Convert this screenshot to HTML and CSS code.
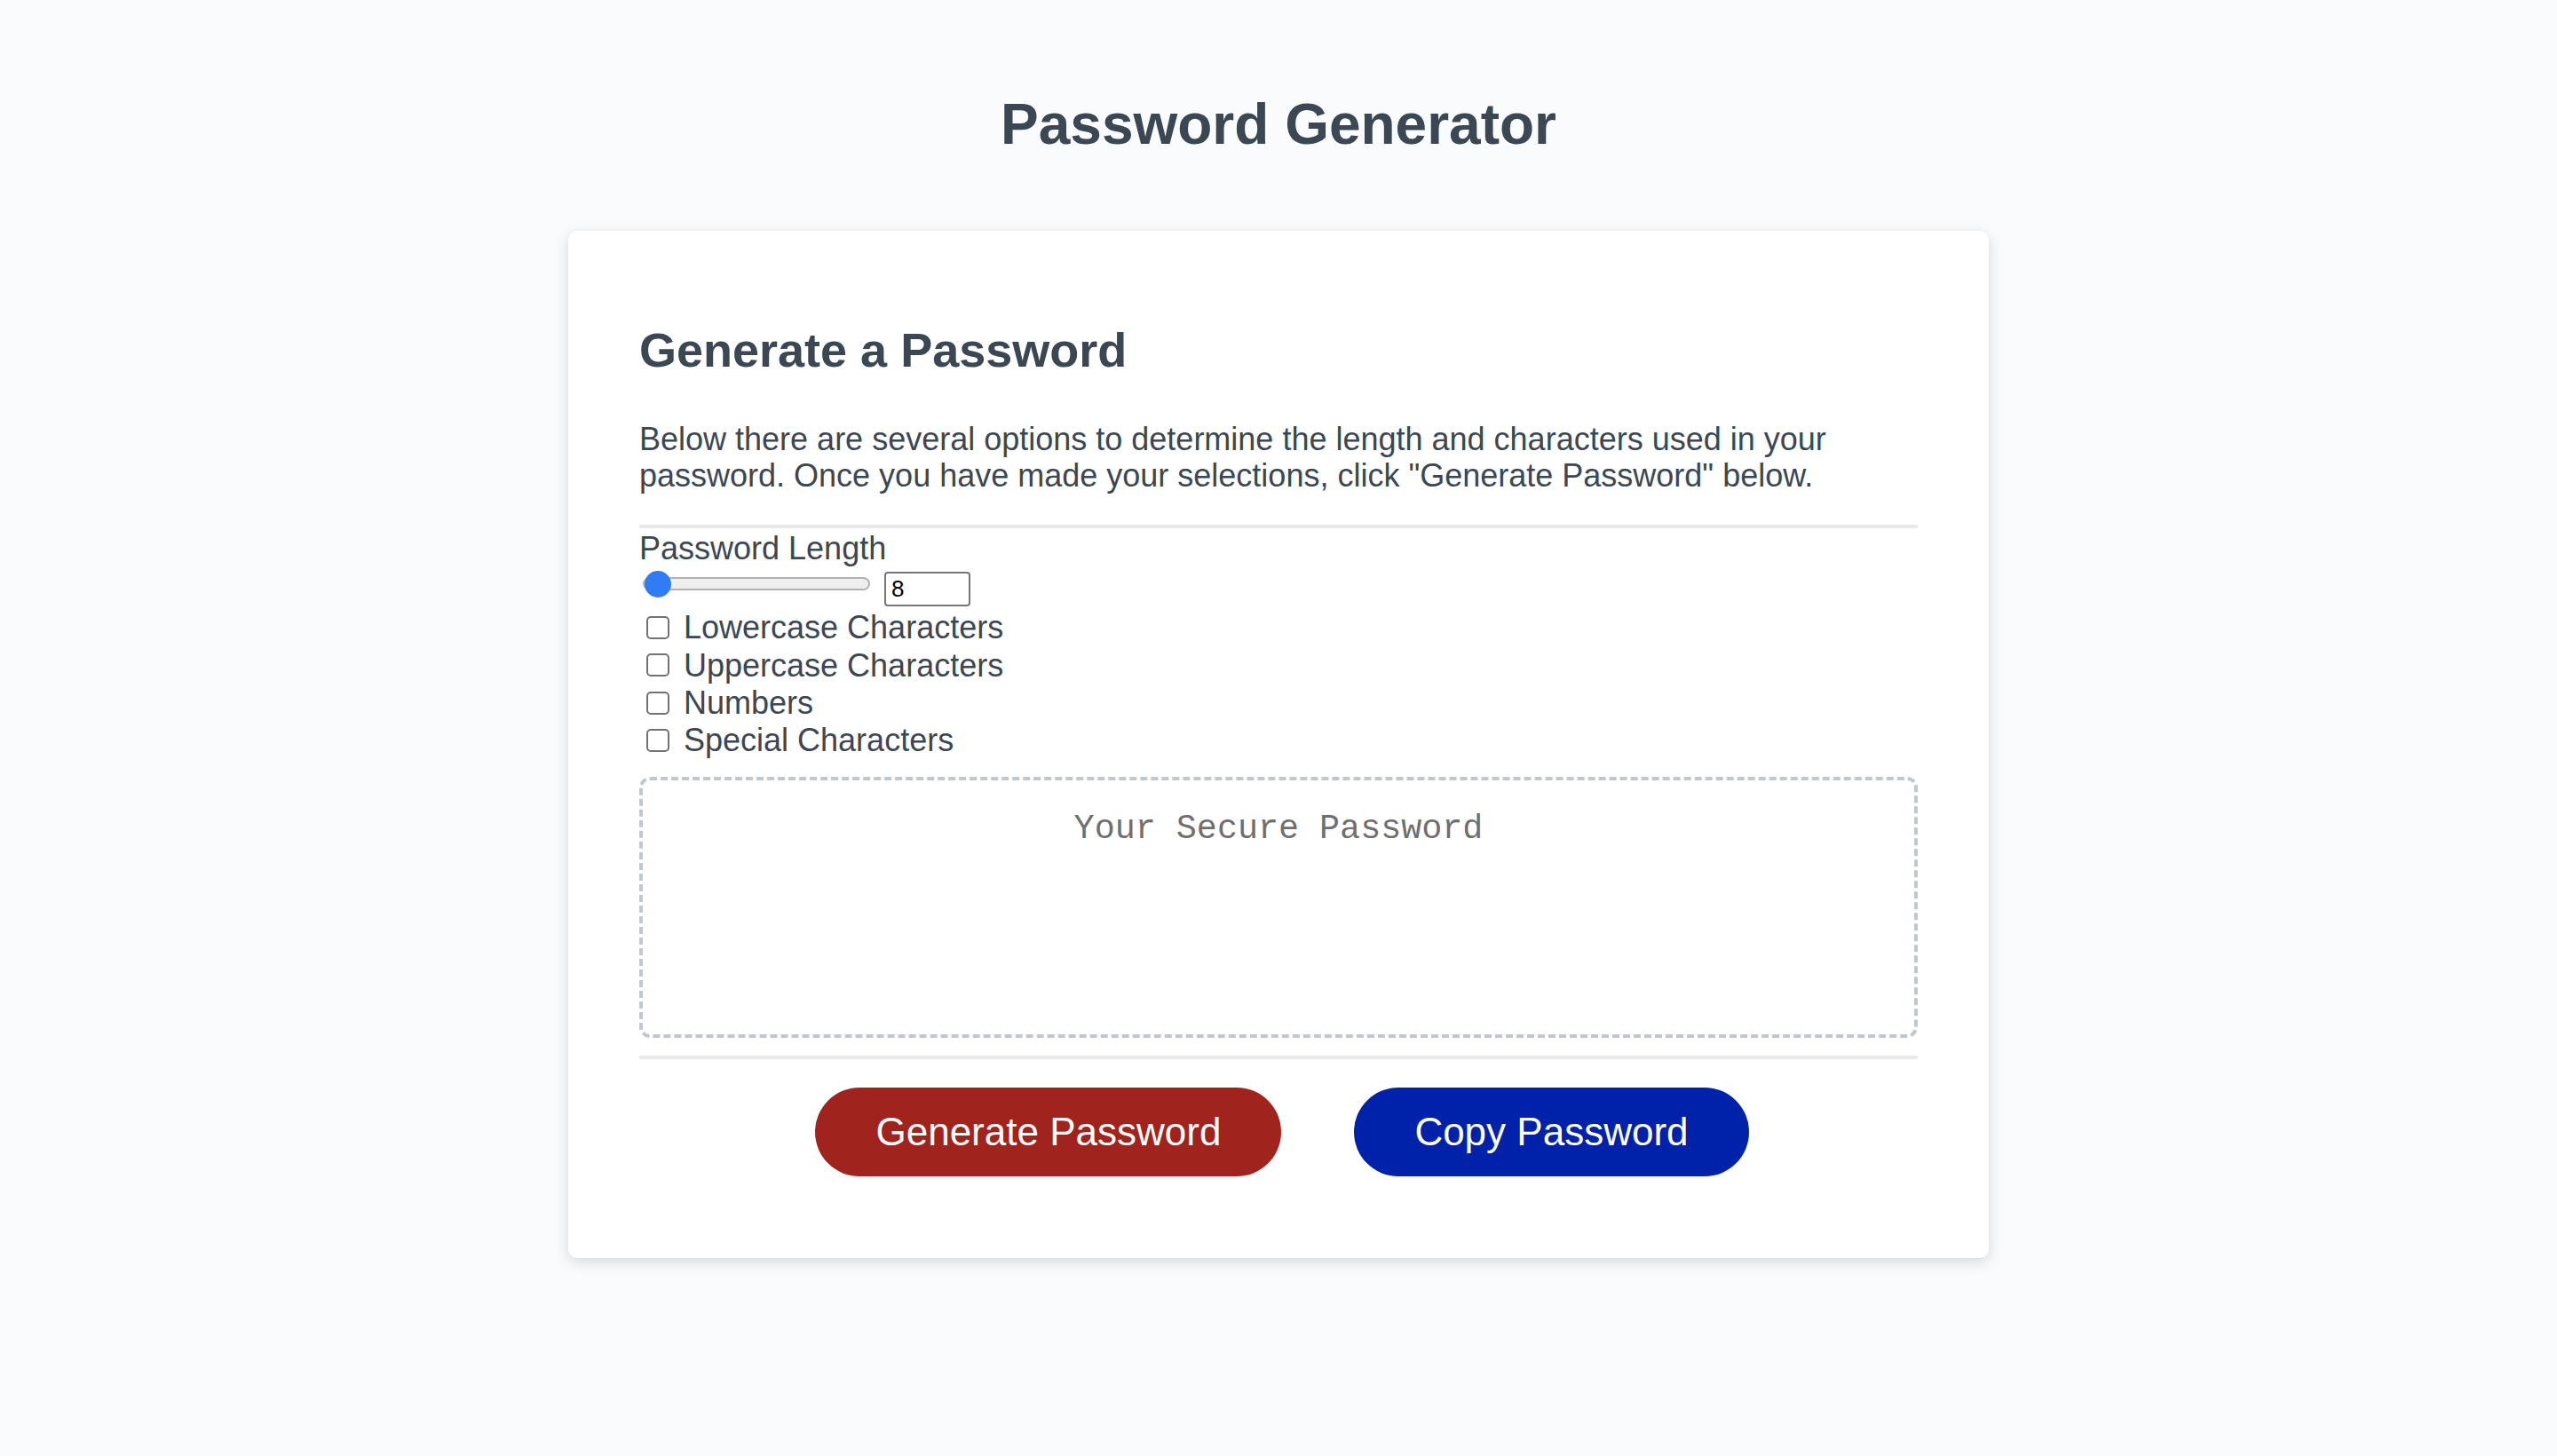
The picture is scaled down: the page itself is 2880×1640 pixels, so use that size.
FILE: index.html
```html
<!DOCTYPE html>
<html lang="en">
<head>
<meta charset="UTF-8">
<title>Password Generator</title>
<link rel="stylesheet" href="styles.css">
</head>
<body>
<div class="wrapper">
  <header class="page-header">
    <h1 class="page-title">Password Generator</h1>
  </header>
  <div class="card">
    <div class="card-header">
      <h2 class="card-title">Generate a Password</h2>
      <p class="card-text">Below there are several options to determine the length and characters used in your password. Once you have made your selections, click "Generate Password" below.</p>
    </div>
    <div class="card-body">
      <div class="field-label">Password Length</div>
      <div class="length-row">
        <input class="length-range" type="range" min="8" max="128" value="8">
        <input class="length-number" type="number" min="8" max="128" value="8">
      </div>
      <label class="option"><input class="option-box" type="checkbox"><span class="option-text">Lowercase Characters</span></label>
      <label class="option"><input class="option-box" type="checkbox"><span class="option-text">Uppercase Characters</span></label>
      <label class="option"><input class="option-box" type="checkbox"><span class="option-text">Numbers</span></label>
      <label class="option"><input class="option-box" type="checkbox"><span class="option-text">Special Characters</span></label>
      <textarea class="password-output" readonly placeholder="Your Secure Password" aria-label="Generated Password"></textarea>
    </div>
    <div class="card-footer">
      <button class="btn btn-generate" type="button">Generate Password</button>
      <button class="btn btn-copy" type="button">Copy Password</button>
    </div>
  </div>
</div>
</body>
</html>
```

FILE: styles.css
```css
*,
*::before,
*::after {
  box-sizing: border-box;
}

html,
body {
  margin: 0;
  padding: 0;
  height: 100%;
}

body {
  font-family: "Liberation Sans", Arial, Helvetica, sans-serif;
  background-color: #f9fbfd;
  color: #3b4753;
}

.wrapper {
  padding: 60px 40px 0;
}

.page-header {
  text-align: center;
  padding: 0 40px 40px;
}

.page-title {
  font-size: 64px;
  line-height: 74px;
  font-weight: 700;
  margin: 43px 0;
  color: #3b4753;
}

.card {
  background-color: #fff;
  border-radius: 10px;
  box-shadow: rgba(0, 0, 0, 0.15) 0 4px 16px 0;
  color: #3b4753;
  font-size: 36px;
  line-height: 41.4px;
  margin: 0 auto;
  max-width: 1600px;
  padding: 60px 80px;
}

.card-title {
  font-size: 54px;
  line-height: 62px;
  font-weight: 700;
  margin: 43px 0 49px;
}

.card-text {
  margin: 0 0 34px;
}

.card-header::after {
  content: "";
  display: block;
  width: 100%;
  height: 4px;
  background: #e7e9eb;
}

.card-body {
  min-height: 200px;
}

.field-label {
  height: 41px;
  padding-top: 2px;
}

.length-row {
  display: flex;
  align-items: flex-start;
  height: 50px;
}

.length-range {
  -webkit-appearance: none;
  appearance: none;
  width: 256px;
  height: 30px;
  margin: 7px 16px 0 4px;
  padding: 0;
  background: transparent;
}

.length-range::-webkit-slider-runnable-track {
  height: 15px;
  background: #efefef;
  border: 2px solid #b2b2b2;
  border-radius: 8px;
}

.length-range::-webkit-slider-thumb {
  -webkit-appearance: none;
  appearance: none;
  width: 30px;
  height: 30px;
  margin-top: -9.5px;
  border-radius: 50%;
  background: #2f7cf6;
  border: none;
}

.length-number {
  -moz-appearance: textfield;
  width: 97px;
  height: 39px;
  margin: 8px 0 0;
  padding: 0 6px;
  border: 2px solid #767676;
  border-radius: 4px;
  font-family: "Liberation Sans", Arial, sans-serif;
  font-size: 26px;
  color: #000;
  background: #fff;
}

.length-number::-webkit-inner-spin-button,
.length-number::-webkit-outer-spin-button {
  -webkit-appearance: none;
  margin: 0;
}

.option {
  display: flex;
  align-items: center;
  height: 42.3px;
}

.option-box {
  -webkit-appearance: none;
  appearance: none;
  width: 26px;
  height: 26px;
  margin: 0 16px 0 8px;
  border: 2px solid #727272;
  border-radius: 5px;
  background: #fff;
  flex: none;
}

.password-output {
  -webkit-appearance: none;
  appearance: none;
  display: block;
  width: 100%;
  height: 294px;
  margin: 20px 0;
  padding: 34px 30px 166px;
  font-family: "Liberation Mono", "Courier New", monospace;
  font-size: 38.4px;
  line-height: 43.5px;
  text-align: center;
  border: 4px dashed #c0c7cf;
  border-radius: 12px;
  resize: none;
  overflow: hidden;
  color: #3b4753;
  background: #fff;
}

.password-output::placeholder {
  color: #6f6f6f;
}

.card-footer {
  text-align: center;
}

.card-footer::before {
  content: "";
  display: block;
  width: 100%;
  height: 4px;
  background: #e7e9eb;
}

.btn {
  border: none;
  border-radius: 50px;
  color: #fff;
  display: inline-block;
  font-family: "Liberation Sans", Arial, sans-serif;
  font-size: 44px;
  line-height: 44px;
  margin: 32px 32px 32px 40px;
  padding: 28px 68px;
  text-align: center;
  cursor: pointer;
  vertical-align: top;
}

.btn-generate {
  background-color: #a1231d;
}

.btn-copy {
  background-color: #0022aa;
}
```
